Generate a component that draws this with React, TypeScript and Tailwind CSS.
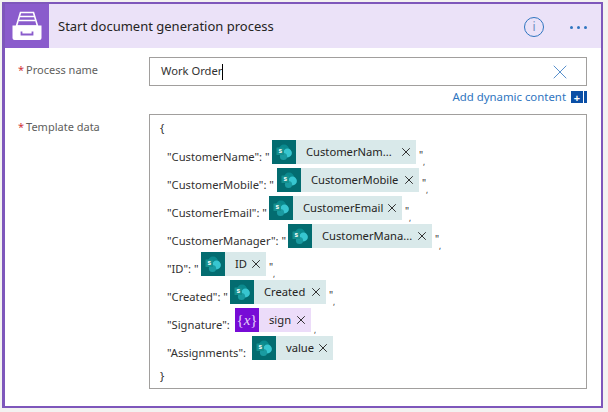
import React from 'react';
import { X } from 'lucide-react';

const iconBg = { sp: 'bg-[#036c70]', var: 'bg-[#770bd6]' };

const SharePointIcon = () => (
  <svg viewBox="0 0 24 24" className="w-6 h-6">
    <circle cx="12" cy="9.5" r="5" fill="#0a8a8e" />
    <circle cx="15.5" cy="13" r="4.4" fill="#37c6d0" />
    <circle cx="11.5" cy="16.5" r="3.6" fill="#1a9ba1" />
    <rect x="4.5" y="7.5" width="7.5" height="7.5" rx="0.5" fill="#14908f" />
    <text x="8.2" y="13.4" fontSize="6.5" fontWeight="700" fill="#ffffff" textAnchor="middle" fontFamily="Liberation Sans, sans-serif">s</text>
  </svg>
);

const VariableIcon = () => (
  <span className="text-[15px] leading-none text-[#e6d3fa] font-['Liberation_Serif',serif] italic">
    <span className="not-italic">{'{'}</span>x<span className="not-italic">{'}'}</span>
  </span>
);

type Row = {
  label: string;
  labelWidth: string;
  token: string;
  width: string;
  kind: 'sp' | 'var';
  quoted: boolean;
  tail: boolean;
};

const rows: Row[] = [
  { label: '"CustomerName": "', labelWidth: 'w-[105px]', token: 'CustomerNam...', width: 'w-[144px]', kind: 'sp', quoted: true, tail: true },
  { label: '"CustomerMobile": "', labelWidth: 'w-[110px]', token: 'CustomerMobile', width: 'w-[142px]', kind: 'sp', quoted: true, tail: true },
  { label: '"CustomerEmail": "', labelWidth: 'w-[102px]', token: 'CustomerEmail', width: 'w-[133px]', kind: 'sp', quoted: true, tail: true },
  { label: '"CustomerManager": "', labelWidth: 'w-[121px]', token: 'CustomerMana...', width: 'w-[144px]', kind: 'sp', quoted: true, tail: true },
  { label: '"ID": "', labelWidth: 'w-[34px]', token: 'ID', width: 'w-[65px]', kind: 'sp', quoted: true, tail: true },
  { label: '"Created": "', labelWidth: 'w-[63px]', token: 'Created', width: 'w-[96px]', kind: 'sp', quoted: true, tail: true },
  { label: '"Signature":', labelWidth: 'w-[68px]', token: 'sign', width: 'w-[76px]', kind: 'var', quoted: false, tail: true },
  { label: '"Assignments":', labelWidth: 'w-[85px]', token: 'value', width: 'w-[81px]', kind: 'sp', quoted: false, tail: false },
];

export default function App() {
  return (
    <div className="w-[608px] h-[412px] bg-[#f3f2f1] pt-[2px] pl-[2px] font-['Noto_Sans','Open_Sans',sans-serif] overflow-hidden">
      <div className="w-[601px] h-[406px] bg-white border-2 border-l-[3px] border-[#7e57bb] box-border">
        {/* Header */}
        <div className="flex items-center h-[44px] bg-[#ebe2f8]">
          <div className="w-[44px] h-[44px] bg-[#8a5ccc] flex items-center justify-center shrink-0">
            <svg viewBox="0 0 32 32" className="w-[32px] h-[32px]">
              <path d="M9.5 2.5h13l4 13.5h-21z" fill="none" stroke="#fff" strokeWidth="1.6" />
              <path d="M9 6.5h14M8 10.5h16" stroke="#fff" strokeWidth="1.6" />
              <path d="M1.5 15.5h29v12.5a2 2 0 0 1-2 2h-25a2 2 0 0 1-2-2z" fill="#fff" />
              <path d="M10.5 21.5v3h11v-3" fill="none" stroke="#8a5ccc" strokeWidth="1.8" />
            </svg>
          </div>
          <span className="ml-[9px] pt-[1px] text-[13px] text-[#252423]">Start document generation process</span>
          <div className="ml-auto pt-[2px] flex items-center">
            <div className="w-[20px] h-[20px] rounded-full border-[1.5px] border-[#2f75c0] flex items-center justify-center text-[12px] text-[#6f8fc0]">i</div>
            <div className="ml-[26px] mr-[14px] flex gap-[4px]">
              <span className="w-[3px] h-[3px] rounded-full bg-[#2f75c0]" />
              <span className="w-[3px] h-[3px] rounded-full bg-[#2f75c0]" />
              <span className="w-[3px] h-[3px] rounded-full bg-[#2f75c0]" />
            </div>
          </div>
        </div>

        <div className="pl-[13px]">
          {/* Process name */}
          <div className="flex mt-[9px]">
            <div className="w-[131px] text-[11px] text-[#605e5c] pt-[5px]">
              <span className="text-[#d13438] mr-[2px]">*</span>Process name
            </div>
            <div className="w-[438px] h-[29px] border border-[#a19f9d] flex items-center pl-[11px] pr-[14px] text-[11.2px] text-[#323130]">
              <span>Work Order</span>
              <span className="w-px h-[16px] bg-black" />
              <X className="ml-auto w-[24px] h-[24px] text-[#2f75c0]" strokeWidth={0.8} />
            </div>
          </div>
          <div className="w-[569px] flex justify-end items-center h-[28px] text-[11.4px] text-[#2f75c0] pb-[6px]">
            <span>Add dynamic content</span>
            <span className="ml-[5px] flex h-[12px]">
              <span className="w-[12px] bg-[#0b4fa6] flex items-center justify-center text-white text-[11px] font-bold leading-none">+</span>
              <span className="ml-px w-[3px] bg-[#0b4fa6]" />
            </span>
          </div>

          {/* Template data */}
          <div className="flex">
            <div className="w-[131px] text-[11px] text-[#605e5c] pt-[5px]">
              <span className="text-[#d13438] mr-[2px]">*</span>Template data
            </div>
            <div className="w-[438px] h-[275px] border border-[#a19f9d] pl-[10px] pt-[5px] text-[11.2px] text-[#323130]">
              <div className="h-[20px]">{'{'}</div>
              {rows.map((row) => (
                <div key={row.label} className="flex items-start h-[28px] pl-[7px]">
                  <span className={`${row.labelWidth} shrink-0 pt-[9px] whitespace-nowrap`}>{row.label}</span>
                  <span className={`${row.width} h-6 flex items-center shrink-0 text-[#252423] ${row.kind === 'sp' ? 'bg-[#d9e9ea]' : 'bg-[#ecdcf9]'}`}>
                    <span className={`w-6 h-6 shrink-0 flex items-center justify-center ${iconBg[row.kind]}`}>
                      {row.kind === 'sp' ? <SharePointIcon /> : <VariableIcon />}
                    </span>
                    <span className="pl-[10px] whitespace-nowrap">{row.token}</span>
                    <X className="ml-auto mr-[3px] w-[14px] h-[14px]" strokeWidth={1.6} />
                  </span>
                  {row.tail && (
                    <span className="pl-[3px] pt-[10px] text-[10px] leading-[10px] whitespace-nowrap">
                      {row.quoted ? '"' : ''}
                      <span className="relative top-[6px] text-[8px]">,</span>
                    </span>
                  )}
                </div>
              ))}
              <div className="pt-[4px]">{'}'}</div>
            </div>
          </div>
        </div>
      </div>
    </div>
  );
}
